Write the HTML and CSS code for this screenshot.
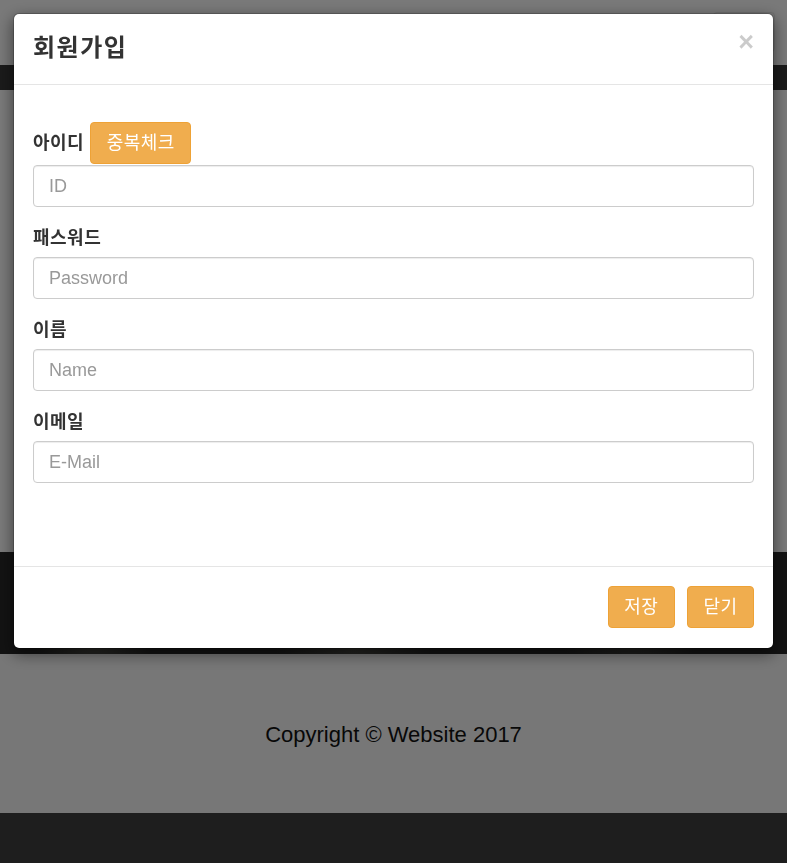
FILE: index.html
```html
<!DOCTYPE html>
<html lang="ko">
<head>
<meta charset="utf-8">
<title>회원가입</title>
<link rel="stylesheet" href="styles.css">
</head>
<body>
<div class="page">
  <div class="topbar"><span class="toggle"></span></div>
  <nav class="navbar"></nav>
  <main class="main"></main>
  <section class="hero"></section>
  <footer class="site-footer">Copyright © Website 2017</footer>
  <div class="bottom"></div>
</div>

<div class="backdrop"></div>
<div class="modal">
  <div class="modal-content">
    <div class="modal-header">
      <h4 class="modal-title">회원가입</h4>
      <span class="close">×</span>
    </div>
    <div class="modal-body">
      <div class="group">
        <div class="label-row">
          <label class="label">아이디</label>
          <button class="btn">중복체크</button>
        </div>
        <input class="input first" type="text" placeholder="ID">
      </div>
      <div class="group">
        <label class="label">패스워드</label>
        <input class="input" type="password" placeholder="Password">
      </div>
      <div class="group">
        <label class="label">이름</label>
        <input class="input" type="text" placeholder="Name">
      </div>
      <div class="group">
        <label class="label">이메일</label>
        <input class="input" type="text" placeholder="E-Mail">
      </div>
    </div>
    <div class="modal-footer">
      <button class="btn">저장</button>
      <button class="btn">닫기</button>
    </div>
  </div>
</div>
</body>
</html>
```

FILE: styles.css
```css
* { box-sizing: border-box; }
html, body { margin: 0; padding: 0; }
body {
  font-family: "Liberation Sans", "Noto Sans CJK KR", sans-serif;
  color: #333;
  overflow: hidden;
}
.page { display: flex; flex-direction: column; height: 863px; }
.topbar { height: 65px; background: #f2f2f2; position: relative; }
.toggle {
  position: absolute; right: 12px; top: 12px;
  width: 62px; height: 40px;
  border: 1px solid #ddd; border-radius: 4px;
}
.navbar { height: 25px; background: #363636; }
.main { height: 462px; background: #f4f4f4; }
.hero {
  height: 102px;
  background:
    radial-gradient(ellipse 60px 30px at 12% 90%, #55554e 0%, transparent 100%),
    radial-gradient(ellipse 80px 40px at 45% 95%, #4a4a44 0%, transparent 100%),
    radial-gradient(ellipse 70px 40px at 80% 85%, #44443f 0%, transparent 100%),
    #262626;
}
.site-footer {
  height: 159px;
  background: #eeeeee;
  display: flex; align-items: center; justify-content: center;
  font-family: "Liberation Sans", sans-serif;
  font-size: 22px;
  color: #111;
  padding-top: 2px;
}
.bottom { flex: 1; background: #3c3c3c; }

.backdrop { position: fixed; inset: 0; background: rgba(0,0,0,0.5); }
.modal { position: fixed; inset: 0; padding: 13px 13px 0 13px; }
.modal-content {
  width: 761px;
  background: #fff;
  border: 1px solid rgba(0,0,0,0.2);
  border-radius: 6px;
  box-shadow: 0 5px 15px rgba(0,0,0,0.5);
  background-clip: padding-box;
}
.modal-header {
  display: flex; align-items: center; justify-content: space-between;
  padding: 16px 19px 23px 19px;
  border-bottom: 1px solid #e5e5e5;
}
.modal-title {
  margin: 0;
  font-family: "Noto Sans CJK KR", sans-serif;
  font-size: 24px;
  line-height: 31px;
  font-weight: 700;
  letter-spacing: 1.5px;
  color: #333;
}
.close {
  font-family: "Liberation Sans", sans-serif;
  font-size: 27px; font-weight: 700; line-height: 1;
  color: #000; opacity: 0.2;
  margin-right: 0; margin-top: -6px;
}
.modal-body { padding: 37px 19px 67px 19px; }
.group { display: flex; flex-direction: column; margin-bottom: 16px; }
.label-row { display: flex; align-items: center; gap: 6px; margin-bottom: 1px; }
.label {
  font-family: "Noto Sans CJK KR", sans-serif;
  font-size: 18px; font-weight: 700; line-height: 26px;
  letter-spacing: 0.5px;
  color: #333;
  margin-bottom: 8px;
}
.label-row .label { margin: 0 0 5px 0; }
.input {
  height: 42px; width: 100%;
  border: 1px solid #ccc; border-radius: 4px;
  box-shadow: inset 0 1px 1px rgba(0,0,0,0.075);
  padding: 0 15px;
  font-family: "Liberation Sans", sans-serif;
  font-size: 18px; color: #555;
  outline: none;
}
.input::placeholder { color: #999; }
.btn {
  height: 42px;
  padding: 0 15.5px 4px;
  font-family: "Noto Sans CJK KR", sans-serif;
  font-size: 18px; line-height: 1;
  letter-spacing: 0.5px;
  color: #fff;
  background: #f0ad4e;
  border: 1px solid #eea236;
  border-radius: 4px;
}
.modal-footer {
  display: flex; justify-content: flex-end; gap: 12px;
  padding: 19px 19px 20px 19px;
  border-top: 1px solid #e5e5e5;
}
```
